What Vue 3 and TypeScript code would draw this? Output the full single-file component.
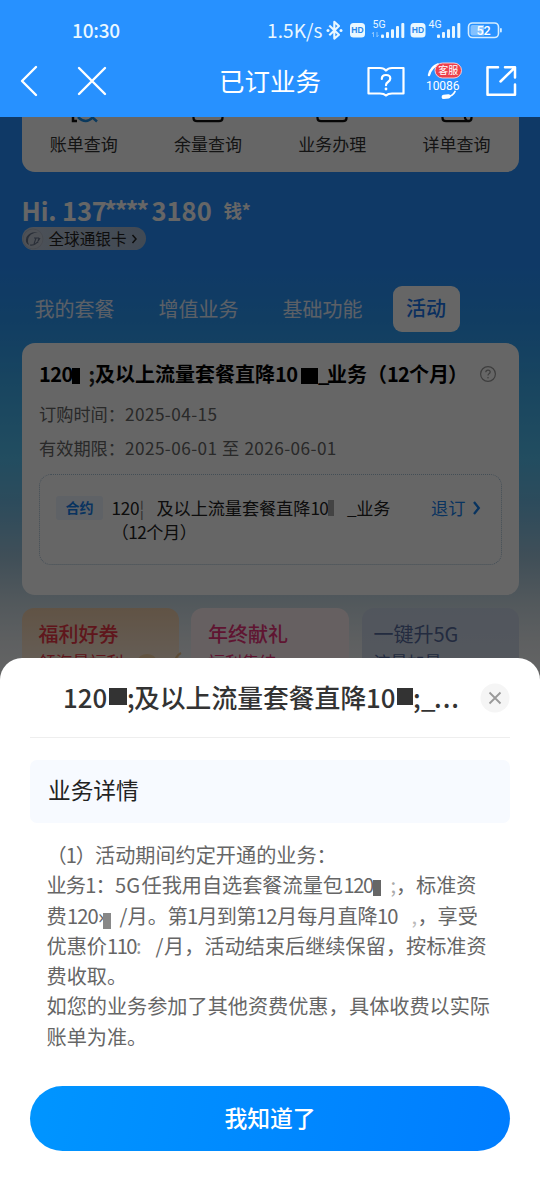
<script setup lang="ts">
interface Run {
  t?: string
  w: number
  ls?: number
  mask?: boolean
  h?: number
  drop?: number
  tone?: string
}

const shortcuts = ['账单查询', '余量查询', '业务办理', '详单查询']
const tabs = ['我的套餐', '增值业务', '基础功能', '活动']
const promos = [
  { title: '福利好券', sub: '领海量福利', cls: 'coupon' },
  { title: '年终献礼', sub: '福利集结', cls: 'gift' },
  { title: '一键升5G', sub: '流量加量', cls: 'speed' },
]

const greeting: Run[] = [
  { t: 'Hi. 137', w: 82.5, ls: -0.15 },
  { t: '****', w: 47.5, ls: -2.2 },
  { t: '3180', w: 72 },
]

const cardTitle: Run[] = [
  { t: '120', w: 32.5, ls: -0.6 },
  { mask: true, w: 8, h: 16, drop: -2, tone: '#000' },
  { w: 9 },
  { t: ';', w: 6.5, tone: '#222' },
  { t: '及以上流量套餐直降', w: 180 },
  { t: '10', w: 26, ls: -0.6 },
  { mask: true, w: 17, h: 16, drop: -2, tone: '#000' },
  { t: '_', w: 9, ls: -2 },
  { t: '业务（', w: 60 },
  { t: '12', w: 22, ls: -0.9 },
  { t: '个月', w: 39 },
  { t: '）', w: 20 },
]

const contractLine: Run[] = [
  { t: '120', w: 28, ls: -0.3 },
  { t: '¦', w: 17, tone: '#777' },
  { t: '及以上流量套餐直降', w: 154, ls: -0.1 },
  { t: '10', w: 17.5, ls: -0.9 },
  { mask: true, w: 6, h: 16, drop: -1, tone: '#a8a8a8' },
  { w: 13 },
  { t: '_业务', w: 43, ls: -0.3 },
]

const sheetTitle: Run[] = [
  { t: '120', w: 46 },
  { mask: true, w: 18, h: 17, drop: 3, tone: '#333' },
  { t: ';', w: 7 },
  { t: '及以上流量套餐直降', w: 232 },
  { t: '10', w: 31 },
  { mask: true, w: 16, h: 17, drop: 3, tone: '#333' },
  { t: ';', w: 8 },
  { t: '_', w: 13 },
  { t: '...', w: 24, ls: 1 },
]

const details: Run[][] = [
  [{ t: '（1）', w: 48.5, ls: -1 }, { t: '活动期间约定开通的业务：', w: 242 }],
  [
    { t: '业务1：', w: 68.5, ls: -0.8 },
    { t: '5G', w: 26.5 },
    { t: '任我用自选套餐流量包', w: 202 },
    { t: '120', w: 29.5, ls: -1.4 },
    { mask: true, w: 7.5, h: 16, drop: -3, tone: '#666' },
    { w: 10 },
    { t: ';', w: 5.5, tone: '#aaa' },
    { t: '，', w: 20 },
    { t: '标准资', w: 61 },
  ],
  [
    { t: '费', w: 20.5 },
    { t: '120', w: 31, ls: -0.9 },
    { t: '›', w: 5, ls: -3 },
    { mask: true, w: 8, h: 16, drop: -5, tone: '#888' },
    { w: 8.5 },
    { t: '/', w: 8 },
    { t: '月。', w: 40 },
    { t: '第1月到第12', w: 109.5, ls: -0.7 },
    { t: '月每月直降', w: 100 },
    { t: '10', w: 34.5, ls: -1 },
    { t: ',', w: 6, tone: '#bbb' },
    { t: '，', w: 20 },
    { t: '享受', w: 40 },
  ],
  [
    { t: '优惠价', w: 60.5 },
    { t: '110', w: 29, ls: -1.5 },
    { t: ':', w: 19.5, tone: '#999' },
    { t: '/', w: 8.5 },
    { t: '月，', w: 40.5 },
    { t: '活动结束后继续保留', w: 181.5 },
    { t: '，', w: 20 },
    { t: '按标准资', w: 81 },
  ],
  [{ t: '费收取。', w: 81 }],
  [{ t: '如您的业务参加了其他资费优惠，', w: 302.5 }, { t: '具体收费以实际', w: 141 }],
  [{ t: '账单为准。', w: 101 }],
]

function runStyle(r: Run) {
  return r.mask
    ? { width: r.w + 'px', height: r.h + 'px', verticalAlign: r.drop + 'px', background: r.tone }
    : { width: r.w + 'px', color: r.tone, letterSpacing: (r.ls ?? 0) + 'px' }
}
</script>

<template>
  <div class="screen">
    <header class="top">
      <div class="status">
        <span class="clock">10:30</span>
        <span class="rate">1.5K/s</span>
        <svg class="status-icons" width="180" height="26" viewBox="325 18 180 26">
          <path d="M329.3 25.5 L339 34.8 L334.3 38.6 V21.9 L339 26 L329.3 35.3" fill="none" stroke="#e9f7ff" stroke-width="2.1" stroke-linejoin="round" />
          <circle cx="328" cy="30.4" r="1.5" fill="#e9f7ff" /><circle cx="341" cy="30.4" r="1.5" fill="#e9f7ff" />
          <rect x="350" y="23" width="15" height="14.5" rx="3.5" fill="#e9f7ff" />
          <text x="357.5" y="33" class="hd" text-anchor="middle">HD</text>
          <text x="372.5" y="27.8" class="net">5G</text>
          <path d="M373.5 37 V32 L372 34 M377 32 V37 L378.5 35" fill="none" stroke="#8cc6ff" stroke-width="1" />
          <g fill="#e9f7ff">
            <rect x="381" y="34.5" width="3" height="3.5" rx="1" /><rect x="386" y="32" width="3" height="6" rx="1" /><rect x="391" y="29.2" width="3" height="8.8" rx="1" /><rect x="396" y="26" width="3" height="12" rx="1" /><rect x="401.3" y="23" width="3" height="15" rx="1" />
            <rect x="410.5" y="23" width="15" height="14.5" rx="3.5" />
            <rect x="437" y="34.5" width="3" height="3.5" rx="1" /><rect x="442" y="32" width="3" height="6" rx="1" /><rect x="447" y="29.2" width="3" height="8.8" rx="1" /><rect x="452" y="26" width="3" height="12" rx="1" /><rect x="457.3" y="23" width="3" height="15" rx="1" />
          </g>
          <text x="418" y="33" class="hd" text-anchor="middle">HD</text>
          <text x="428.5" y="27.8" class="net">4G</text>
          <rect x="468.5" y="23" width="30" height="14.5" rx="4" fill="none" stroke="#d5edff" stroke-width="1.6" />
          <path d="M472.5 25 H484 V35.5 H472.5 Q470.5 35.5 470.5 33.5 V27 Q470.5 25 472.5 25Z" fill="#83c1ff" />
          <rect x="500" y="28" width="1.8" height="4.5" rx=".9" fill="#d5edff" />
          <text x="483.5" y="34.5" class="battery" text-anchor="middle">52</text>
        </svg>
      </div>
      <nav class="nav">
        <svg class="back" width="20" height="36" viewBox="0 0 20 36"><path d="M17 4 L3 18 L17 32" fill="none" stroke="#fff" stroke-width="2.4" stroke-linecap="round" stroke-linejoin="round" /></svg>
        <svg class="close" width="32" height="36" viewBox="0 0 32 36"><path d="M3 5 L29 31 M29 5 L3 31" fill="none" stroke="#fff" stroke-width="2.4" stroke-linecap="round" /></svg>
        <h1>已订业务</h1>
        <svg width="40" height="36" viewBox="0 0 40 36">
          <path d="M2.5 5 H14 Q18 5 20 7.5 Q22 5 26 5 H37.5 V30.5 H26 Q22 30.5 20 32.5 Q18 30.5 14 30.5 H2.5Z" fill="none" stroke="#fff" stroke-width="2.2" stroke-linejoin="round" />
          <path d="M15.8 16 Q15.8 12 20 12 Q24.3 12 24.3 15.5 Q24.3 17.5 22 19 Q20 20.3 20 22.2" fill="none" stroke="#fff" stroke-width="2.2" stroke-linecap="round" />
          <circle cx="20" cy="26" r="1.4" fill="#fff" />
        </svg>
        <svg class="service" width="40" height="40" viewBox="0 0 40 40">
          <path d="M5 14 Q7 6 14 3.5" fill="none" stroke="#fff" stroke-width="2.4" stroke-linecap="round" />
          <path d="M31 30.5 Q29 35 23 36" fill="none" stroke="#fff" stroke-width="1.8" stroke-linecap="round" />
          <rect x="17.5" y="33.5" width="9" height="4.2" rx="2.1" fill="#fff" transform="rotate(-7 22 35)" />
          <rect x="11" y="2" width="26.5" height="15" rx="7.5" fill="#ed414c" stroke="#ffd8dc" stroke-width=".9" />
          <text x="24.2" y="13.2" class="svc" text-anchor="middle">客服</text>
          <text x="18.7" y="28.5" class="num" text-anchor="middle">10086</text>
        </svg>
        <svg class="share" width="34" height="36" viewBox="0 0 34 36">
          <path d="M14 4.3 H3.5 V31.7 H31 V21.5 M21 4.3 H31 V14.5 M30 5.3 L16.5 18.5" fill="none" stroke="#fff" stroke-width="2.5" stroke-linecap="round" stroke-linejoin="round" />
        </svg>
      </nav>
    </header>

    <main class="page">
      <section class="shortcuts">
        <div v-for="(s, i) in shortcuts" :key="s" class="shortcut">
          <svg width="36" height="8" viewBox="0 0 36 8">
            <g v-if="i === 0" fill="none">
              <path d="M7 0 V4 H11" stroke="#111" stroke-width="2.5" />
              <path d="M12 0 Q20 8 27 0 M26 0 L31 4.5" stroke="#198fe8" stroke-width="2.5" />
            </g>
            <g v-else fill="none" stroke="#111" stroke-width="2.2">
              <path d="M3.5 -2 V1 Q3.5 4.2 7 4.2 H29 Q32.5 4.2 32.5 1 V-2" />
              <path v-if="i === 3" d="M26 -1 V1 Q27 4.5 31 4" />
            </g>
          </svg>
          <span>{{ s }}</span>
        </div>
      </section>

      <section class="user">
        <div class="hello">
          <b class="runs"><span v-for="(r, i) in greeting" :key="i" class="run" :style="runStyle(r)">{{ r.t }}</span></b>
          <strong>钱*</strong>
        </div>
        <div class="level">
          <svg width="22" height="22" viewBox="0 0 22 22">
            <circle cx="11" cy="11" r="10" fill="#c3cbd8" stroke="#b2bac8" />
            <path d="M16 4.5 Q8 3 4.5 9 Q2.5 15 7 17 Q4 11 9 6.5 Q12 4.5 16 4.5Z" fill="#69758c" />
            <path d="M8 17 Q14 18 18 10 M12 10 H17 M14 10 L12 16 M17 10 L15.5 15" fill="none" stroke="#69758c" stroke-width="1.1" />
          </svg>
          <span>全球通银卡</span>
          <svg width="7" height="12" viewBox="0 0 7 12"><path d="M1.5 2 L5 6 L1.5 10" fill="none" stroke="#222" stroke-width="1.5" /></svg>
        </div>
      </section>

      <div class="tabs">
        <span v-for="(t, i) in tabs" :key="t" :class="['tab', { active: i === 3 }]">{{ t }}</span>
      </div>

      <section class="card">
        <div class="card-head">
          <div class="runs"><span v-for="(r, i) in cardTitle" :key="i" class="run" :style="runStyle(r)">{{ r.t }}</span></div>
          <svg width="18" height="18" viewBox="0 0 18 18">
            <circle cx="9" cy="9" r="7.4" fill="none" stroke="#999" stroke-width="1.2" />
            <path d="M6.8 7.3 Q6.8 5.2 9 5.2 Q11.2 5.2 11.2 7.1 Q11.2 8.1 10 8.8 Q9 9.4 9 10.6" fill="none" stroke="#999" stroke-width="1.2" />
            <circle cx="9" cy="12.7" r=".8" fill="#999" />
          </svg>
        </div>
        <p class="meta"><span>订购时间：</span><em>2025-04-15</em></p>
        <p class="meta"><span>有效期限：</span><em>2025-06-01 至 2026-06-01</em></p>
        <div class="contract">
          <span class="tag">合约</span>
          <div class="contract-name">
            <div class="runs"><span v-for="(r, i) in contractLine" :key="i" class="run" :style="runStyle(r)">{{ r.t }}</span></div>
            <div class="term">（12个月）</div>
          </div>
          <span class="cancel">退订</span>
          <svg class="go" width="10" height="16" viewBox="0 0 10 16"><path d="M2 2 L6.8 8 L2 14" fill="none" stroke="#1580ee" stroke-width="2.3" /></svg>
        </div>
      </section>

      <section class="promos">
        <div v-for="p in promos" :key="p.title" :class="['promo', p.cls]">
          <h2>{{ p.title }}</h2>
          <p>{{ p.sub }}</p>
          <svg v-if="p.cls === 'coupon'" class="coins" width="50" height="16" viewBox="0 0 50 16"><ellipse cx="15" cy="9" rx="9" ry="6" fill="#f6d2a2" /><path d="M43 13 Q43 5 49 2" fill="none" stroke="#e8c08a" stroke-width="2" /></svg>
        </div>
      </section>
    </main>

    <div class="dim"></div>

    <section class="sheet">
      <div class="sheet-head">
        <div class="runs"><span v-for="(r, i) in sheetTitle" :key="i" class="run" :style="runStyle(r)">{{ r.t }}</span></div>
        <svg width="30" height="30" viewBox="0 0 30 30"><circle cx="15" cy="15" r="14.5" fill="#f5f5f5" /><path d="M9.5 9.5 L20.5 20.5 M20.5 9.5 L9.5 20.5" stroke="#999" stroke-width="1.8" /></svg>
      </div>
      <h3>业务详情</h3>
      <div class="details">
        <div v-for="(line, n) in details" :key="n" class="runs"><span v-for="(r, i) in line" :key="i" class="run" :style="runStyle(r)">{{ r.t }}</span></div>
      </div>
      <button type="button">我知道了</button>
    </section>
  </div>
</template>

<style>
body { margin: 0; }
</style>

<style scoped>
.screen {
  position: relative;
  width: 540px;
  height: 1200px;
  overflow: hidden;
  font-family: "Noto Sans CJK SC", "Noto Sans", sans-serif;
}
.screen * { box-sizing: border-box; }
svg { display: block; flex: none; }
.runs { display: block; white-space: nowrap; }
.run { display: inline-block; white-space: pre; }

.top { height: 117px; background: #2791ff; color: #fff; }
.status { height: 61px; display: flex; align-items: center; padding-left: 72px; font-size: 19px; font-weight: 500; color: #e9f7ff; }
.clock { width: 195px; padding-bottom: 2px; letter-spacing: -.2px; }
.rate { width: 58px; padding-bottom: 2px; font-weight: 400; letter-spacing: .1px; }
.hd { font: bold 8.5px "Liberation Sans", sans-serif; fill: #2887ec; }
.net { font: 10.5px Roboto, sans-serif; fill: #e9f7ff; }
.battery { font: 500 12.5px Roboto, sans-serif; fill: #fff; }
.nav { height: 40px; display: flex; align-items: center; padding-left: 19px; }
.close { margin-left: 37px; }
.nav h1 { margin: 0 44px 0 111px; padding-bottom: 3px; width: 103px; font-size: 25.5px; line-height: 36px; font-weight: 400; white-space: nowrap; }
.service { margin-left: 18px; }
.share { margin-left: 20px; }
.svc { font: 10px "Noto Sans CJK SC", sans-serif; fill: #fff; }
.num { font: 12px Roboto, sans-serif; fill: #fff; letter-spacing: -.1px; }

.page {
  height: 1083px;
  padding: 0 21px 0 21.5px;
  background: linear-gradient(180deg, #2690ff 0, #2690ff 150px, #2c9af5 205px, #3faef0 270px, #55c0f0 340px, #70bce6 385px, #a0c5dc 440px, #cddde6 485px, #ebeff2 525px, #fff 570px);
}
.shortcuts { display: flex; height: 55px; background: #fff; border-radius: 0 0 13px 13px; }
.shortcut { width: 124.3px; display: flex; flex-direction: column; align-items: center; font-size: 17px; line-height: 24px; color: #333; }
.shortcut span { margin-top: 7px; }
.user { height: 114px; padding-top: 22px; }
.hello { display: flex; align-items: center; height: 32px; margin-bottom: 1px; color: #fff; line-height: 32px; white-space: nowrap; }
.hello b { width: 202px; font-size: 25.5px; font-weight: 700; }
.hello strong { font-size: 18.5px; letter-spacing: -.4px; }
.level { width: 124px; height: 23px; display: flex; align-items: center; border-radius: 12px; background: linear-gradient(90deg, #c0cbdc, #a3b8d3); font-size: 15.6px; line-height: 23px; color: #222; }
.level span { margin: 0 4px 0 5px; width: 78px; white-space: nowrap; }
.tabs { display: flex; align-items: center; height: 46px; font-size: 20px; line-height: 28px; color: #e5efff; padding-left: 13px; }
.tab { width: 124px; padding-bottom: 1px; white-space: nowrap; }
.tab.active { width: 67px; height: 46px; margin-left: -13.5px; padding-left: 13px; line-height: 44px; font-weight: 500; background: #fff; color: #1976ed; border-radius: 9px; }
.card { height: 252px; margin-top: 11px; padding: 16px 17.5px 0; background: #fff; border-radius: 13px; }
.card-head { display: flex; align-items: center; height: 30px; font-size: 20px; line-height: 30px; font-weight: 700; color: #000; }
.card-head .runs { width: 440px; }
.meta { margin: 0; display: flex; font-size: 17.2px; line-height: 34px; color: #666; }
.meta:nth-child(2) { margin-top: 8px; }
.meta span { width: 86px; white-space: nowrap; }
.meta em { font-style: normal; letter-spacing: .42px; word-spacing: .4px; }
.contract { display: flex; height: 91px; margin-top: 8.5px; border: 1px dotted #a9c3d8; border-radius: 12px; padding: 21px 0 0 16px; }
.tag { width: 47px; height: 24px; border-radius: 3px; background: #edf5ff; color: #1580ee; font-size: 14px; line-height: 23px; font-weight: 700; text-align: center; }
.contract-name { width: 328px; padding-left: 8.5px; font-size: 17.2px; line-height: 24px; color: #222; }
.contract-name .runs { height: 24px; }
.term { letter-spacing: -.5px; }
.cancel { width: 41px; font-size: 17.2px; line-height: 24px; color: #1580ee; }
.go { margin-top: 4px; }
.promos { display: grid; grid-template-columns: 157px 158px 157px; column-gap: 12.5px; margin-top: 13px; }
.promo { position: relative; height: 110px; border-radius: 12px; padding: 11px 17px; }
.promo h2 { margin: 0; font-size: 20px; line-height: 29px; font-weight: 500; white-space: nowrap; }
.promo p { margin: 0; font-size: 17px; line-height: 27px; }
.coupon { background: linear-gradient(180deg, #f1cfac, #ffeedc 60px); color: #ee3746; }
.gift { background: #fff0f3; color: #ed367c; }
.speed { background: linear-gradient(180deg, #cbd6e8, #d8dfea); color: #576c9e; padding-left: 12px; }
.speed h2 { font-weight: 400; }
.coins { position: absolute; left: 110px; top: 43px; }

.dim { position: absolute; top: 117px; right: 0; bottom: 0; left: 0; background: rgba(0, 0, 0, .6); }
.sheet { position: absolute; right: 0; bottom: 0; left: 0; height: 542px; padding: 0 30px; background: #fff; border-radius: 22px 22px 0 0; }
.sheet-head { display: flex; align-items: center; height: 80px; border-bottom: 1px solid #eee; padding-left: 33px; color: #333; font-size: 25.8px; line-height: 36px; font-weight: 500; }
.sheet-head .runs { width: 418px; padding-bottom: 2px; }
.sheet h3 { margin: 22px 0 0; height: 63px; padding-left: 18px; border-radius: 7px; background: #f7faff; color: #222; font-size: 22.7px; line-height: 60px; font-weight: 400; }
.details { height: 247px; padding: 17px 0 0 16.5px; font-size: 20.15px; line-height: 30.3px; color: #666; }
.details .runs { height: 30.3px; }
.sheet button { display: block; width: 480px; height: 65px; margin: 16px 0 0; padding: 0 0 2px; border: 0; border-radius: 33px; background: linear-gradient(100deg, #0095ff, #007dff); color: #fff; font: 500 22.8px/62px "Noto Sans CJK SC", sans-serif; text-align: center; }
</style>
